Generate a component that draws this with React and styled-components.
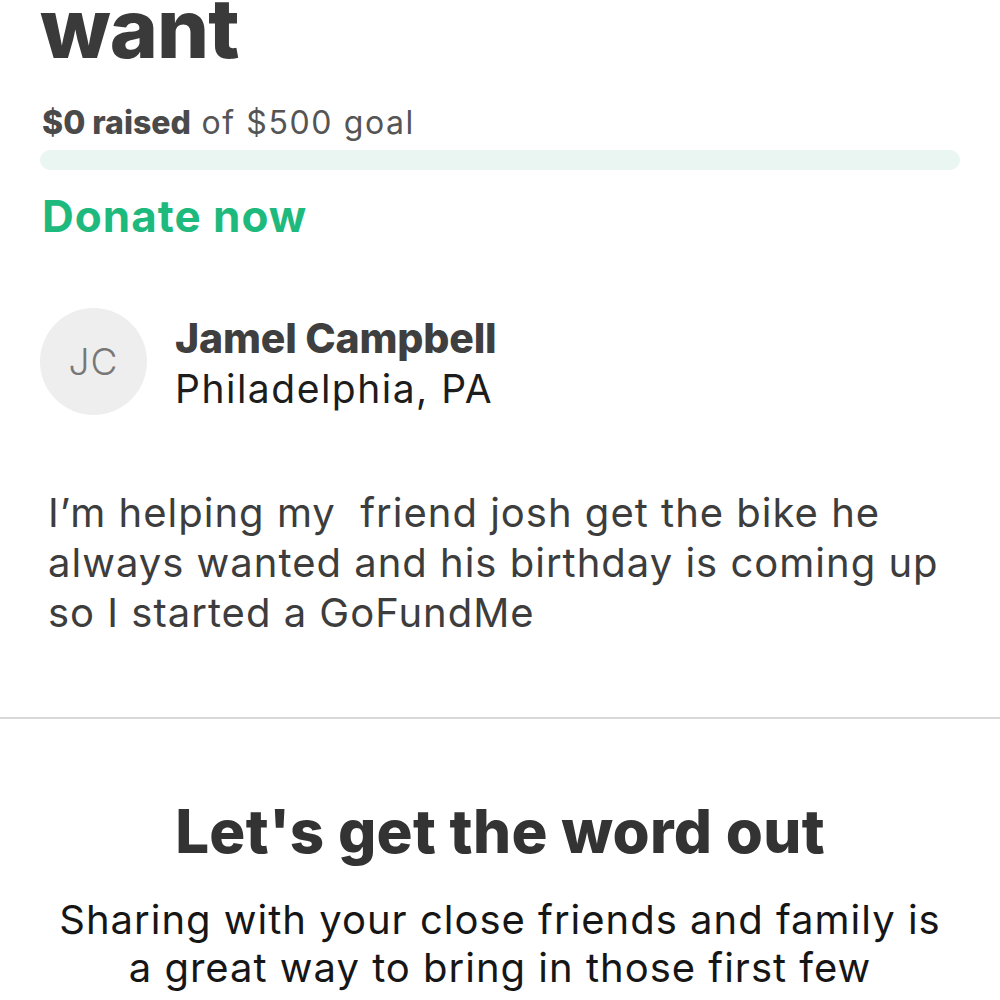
import React from 'react';
import styled, {createGlobalStyle} from 'styled-components';

const GlobalStyle = createGlobalStyle`
    html, body{
        margin:0;
        padding:0;
        background:#fff;
        overflow:hidden;
    }
    body{
        font-family:Inter, "Noto Sans", sans-serif;
        color:#333;
    }
`;

const Page = styled.div`
    width:1000px;
    height:1000px;
    overflow:hidden;
    display:flex;
    flex-direction:column;
`;

const Campaign = styled.section`
    padding:0 40px 0 42px;
    display:flex;
    flex-direction:column;
`;

const Title = styled.h1`
    margin:-16px 0 0 -2px;
    font-size:82px;
    line-height:90px;
    font-weight:800;
    letter-spacing:-0.8px;
    color:#3a3a3a;
`;

const Raised = styled.div`
    margin-top:29px;
    font-size:32px;
    line-height:40px;
    color:#555;
    letter-spacing:1.6px;
    b{
        font-weight:800;
        color:#4a4a4a;
        letter-spacing:0;
    }
`;

const Progress = styled.div`
    margin-top:7px;
    margin-left:-2px;
    height:20px;
    border-radius:10px;
    background:#eaf6f1;
`;

const DonateLink = styled.a`
    margin-top:20px;
    font-size:44px;
    line-height:52px;
    font-weight:700;
    color:#1eb97c;
    text-decoration:none;
    letter-spacing:1px;
`;

const Organizer = styled.div`
    margin-top:66px;
    margin-left:-2px;
    display:flex;
    align-items:center;
    gap:28px;
`;

const Avatar = styled.div`
    width:107px;
    height:107px;
    border-radius:50%;
    background:#eeeeee;
    color:#777;
    font-size:37px;
    font-weight:300;
    letter-spacing:1px;
    display:flex;
    align-items:center;
    justify-content:center;
    flex-shrink:0;
`;

const OrganizerInfo = styled.div`
    display:flex;
    flex-direction:column;
    margin-top:4px;
`;

const Name = styled.div`
    font-size:41px;
    line-height:51px;
    font-weight:800;
    color:#3f3f3f;
    letter-spacing:-0.2px;
`;

const Location = styled.div`
    font-size:39px;
    line-height:50px;
    color:#1d1d1d;
    letter-spacing:1.5px;
`;

const Story = styled.p`
    margin:73px 0 0 6px;
    font-size:40px;
    line-height:50px;
    color:#3d3d3d;
    letter-spacing:1px;
    white-space:pre-wrap;
`;

const Divider = styled.hr`
    margin:79px 0 0;
    border:none;
    height:2px;
    background:#d8d8d8;
`;

const Share = styled.section`
    padding:77px 50px 0;
    text-align:center;
`;

const ShareTitle = styled.h2`
    margin:0;
    font-size:60px;
    line-height:70px;
    font-weight:800;
    color:#333;
    letter-spacing:0.3px;
`;

const ShareText = styled.p`
    margin:30px 0 0;
    font-size:40px;
    line-height:48px;
    color:#161616;
    letter-spacing:1px;
`;

export default function App(){
    return(
        <Page>
            <GlobalStyle/>
            <Campaign>
                <Title>want</Title>
                <Raised><b>$0 raised</b> of $500 goal</Raised>
                <Progress/>
                <DonateLink href="#">Donate now</DonateLink>
                <Organizer>
                    <Avatar>JC</Avatar>
                    <OrganizerInfo>
                        <Name>Jamel Campbell</Name>
                        <Location>Philadelphia, PA</Location>
                    </OrganizerInfo>
                </Organizer>
                <Story>{"I’m helping my  friend josh get the bike he always wanted and his birthday is coming up so I started a GoFundMe"}</Story>
            </Campaign>
            <Divider/>
            <Share>
                <ShareTitle>Let's get the word out</ShareTitle>
                <ShareText>Sharing with your close friends and family is a great way to bring in those first few</ShareText>
            </Share>
        </Page>
    )
}
